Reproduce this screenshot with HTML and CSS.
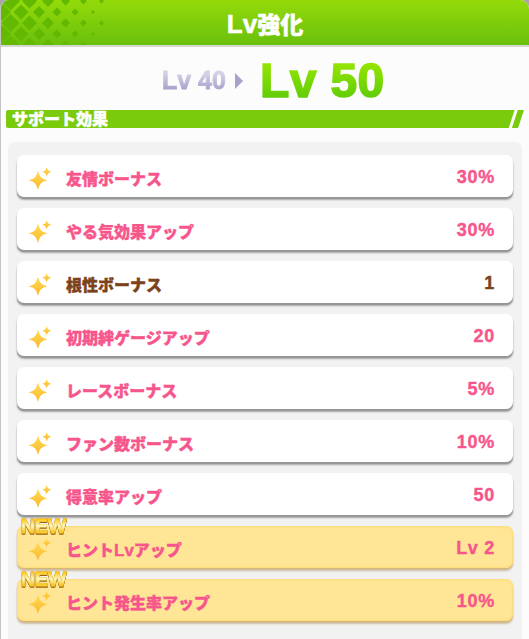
FILE: index.html
```html
<!DOCTYPE html>
<html lang="ja">
<head>
    <meta charset="UTF-8">
    <meta name="viewport" content="width=device-width, initial-scale=1.0">
    <title>Lv強化</title>
    <link rel="stylesheet" href="styles.css">
</head>
<body>

    <!-- Shared sparkle icon -->
    <svg class="defs" width="0" height="0">
        <defs>
            <linearGradient id="gold" x1="0" y1="0" x2="0" y2="1">
                <stop offset="0" stop-color="#ffdd55"/>
                <stop offset="1" stop-color="#fbb62c"/>
            </linearGradient>
            <symbol id="sparkle" viewBox="0 0 24 24">
                <path fill="url(#gold)" d="M10 3.500C11.800 10 13.200 11.600 19.500 13.300C13.200 15 11.800 16.600 10 23C8.200 16.600 6.800 15 0.500 13.300C6.800 11.600 8.200 10 10 3.500Z"/>
                <path fill="url(#gold)" d="M18.700 0C19.500 3 20.300 3.800 23.500 4.800C20.300 5.800 19.500 6.500 18.700 9.500C17.900 6.500 17.200 5.800 14 4.800C17.200 3.800 17.900 3 18.700 0Z"/>
            </symbol>
        </defs>
    </svg>

    <div class="dialog">
        <header class="header">
            <svg class="pattern" width="110" height="45" viewBox="0 0 110 45">
                <path d="M0 1l9.500-9.500 9.500 9.500-9.500 9.500zM21 1l7.500-7.500 7.500 7.500-7.500 7.500zM41 1l6-6 6 6-6 6zM60 1l4.500-4.500 4.500 4.500-4.500 4.500zM79 1l3.500-3.500 3.500 3.500-3.500 3.500zM98 1l2.500-2.500 2.500 2.500-2.500 2.500z"/>
                <path d="M-7 12l8.500-8.500 8.500 8.500-8.500 8.500zM12.500 12l7.500-7.500 7.500 7.500-7.500 7.500zM32 12l6-6 6 6-6 6zM51.500 12l4.500-4.500 4.500 4.500-4.500 4.500zM70.500 12l3.500-3.500 3.500 3.500-3.500 3.500zM90 12l2-2 2 2-2 2z"/>
                <path d="M0.500 23l9-9 9 9-9 9zM21 23l7.500-7.500 7.500 7.500-7.500 7.500zM41 23l6-6 6 6-6 6zM60 23l4.500-4.500 4.500 4.500-4.500 4.500zM79 23l3.500-3.500 3.500 3.500-3.500 3.500zM98 23l2.500-2.500 2.500 2.500-2.500 2.500z"/>
                <path d="M-7 34l8.500-8.500 8.500 8.500-8.500 8.500zM12.500 34l7.500-7.500 7.500 7.500-7.500 7.500zM32 34l6-6 6 6-6 6zM51.500 34l4.500-4.500 4.500 4.500-4.500 4.500zM70.500 34l3.500-3.500 3.500 3.500-3.500 3.500zM90 34l2-2 2 2-2 2z"/>
                <path d="M0.500 45l9-9 9 9-9 9zM21 45l7.500-7.500 7.500 7.500-7.500 7.500zM41 45l6-6 6 6-6 6zM60 45l4.500-4.500 4.500 4.500-4.500 4.500zM79 45l3.500-3.500 3.500 3.500-3.500 3.500z"/>
            </svg>
            <h1><span class="latin">Lv</span>強化</h1>
        </header>

        <div class="levels">
            <span class="level-old">Lv 40</span>
            <span class="arrow"></span>
            <span class="level-new">Lv 50</span>
        </div>

        <div class="section-bar">
            <h2>サポート効果</h2>
        </div>

        <div class="effects">
            <div class="effect">
                <svg class="icon"><use href="#sparkle"/></svg>
                <span class="name">友情ボーナス</span>
                <span class="value">30%</span>
            </div>
            <div class="effect">
                <svg class="icon"><use href="#sparkle"/></svg>
                <span class="name">やる気効果アップ</span>
                <span class="value">30%</span>
            </div>
            <div class="effect unchanged">
                <svg class="icon"><use href="#sparkle"/></svg>
                <span class="name">根性ボーナス</span>
                <span class="value">1</span>
            </div>
            <div class="effect">
                <svg class="icon"><use href="#sparkle"/></svg>
                <span class="name">初期絆ゲージアップ</span>
                <span class="value">20</span>
            </div>
            <div class="effect">
                <svg class="icon"><use href="#sparkle"/></svg>
                <span class="name">レースボーナス</span>
                <span class="value">5%</span>
            </div>
            <div class="effect">
                <svg class="icon"><use href="#sparkle"/></svg>
                <span class="name">ファン数ボーナス</span>
                <span class="value">10%</span>
            </div>
            <div class="effect">
                <svg class="icon"><use href="#sparkle"/></svg>
                <span class="name">得意率アップ</span>
                <span class="value">50</span>
            </div>
            <div class="effect new">
                <span class="badge">NEW</span>
                <svg class="icon"><use href="#sparkle"/></svg>
                <span class="name">ヒント<span class="latin">Lv</span>アップ</span>
                <span class="value">Lv 2</span>
            </div>
            <div class="effect new">
                <span class="badge">NEW</span>
                <svg class="icon"><use href="#sparkle"/></svg>
                <span class="name">ヒント発生率アップ</span>
                <span class="value">10%</span>
            </div>
        </div>
    </div>

</body>
</html>
```
FILE: styles.css
```css
/* General Styles */
* {
    box-sizing: border-box;
}

body {
    margin: 0;
    background: #aaa5ab;
    font-family: "Noto Sans CJK JP", sans-serif;
    font-weight: 900;
    overflow: hidden;
}

h1, h2 {
    margin: 0;
    color: #fff;
    font-weight: 900;
    -webkit-text-stroke: 0.5px;
}

.defs {
    display: block;
}

.dialog {
    height: 639px;
    background: #fcfcfc;
    border-left: 1px solid #c4c3c6;
    border-radius: 9px 9px 0 0;
    overflow: hidden;
}

/* Header */
.header {
    position: relative;
    display: flex;
    align-items: center;
    justify-content: center;
    height: 47px;
    background: linear-gradient(#94da0a, #69c00d);
    border-bottom: 2px solid #d6d6d9;
}

.pattern {
    position: absolute;
    left: 0;
    top: 0;
    fill: #63b900;
}

.header h1 {
    font-size: 23px;
    line-height: 45px;
    padding-top: 2px;
}

.header .latin {
    font-size: 26px;
}

.latin,
.value,
.level-old,
.level-new {
    font-family: "Liberation Sans", sans-serif;
    font-weight: bold;
}

/* Level change */
.levels {
    display: flex;
    align-items: center;
    height: 63px;
    padding-left: 161px;
    padding-top: 4px;
}

.level-old {
    font-size: 25px;
    background: linear-gradient(#d5d1e5 25%, #a9a2cd 80%);
    background-clip: text;
    color: transparent;
    -webkit-text-stroke: 0.8px transparent;
}

.arrow {
    margin: 0 15px 0 9px;
    border-left: 8px solid #a6a1cd;
    border-top: 8px solid transparent;
    border-bottom: 8px solid transparent;
}

.level-new {
    padding: 0 2px;
    font-size: 48px;
    letter-spacing: 0.4px;
    background: linear-gradient(#94e500 20%, #62cd08 80%);
    background-clip: text;
    color: transparent;
    -webkit-text-stroke: 1.6px transparent;
}

/* Section title */
.section-bar {
    height: 18px;
    margin: 0 5px;
    padding-left: 6px;
    border-radius: 2px 0 0 2px;
    background: linear-gradient(108deg, #79cb0c calc(100% - 15px), #fcfcfc calc(100% - 14px), #fcfcfc calc(100% - 12px), #79cb0c calc(100% - 11px));
    clip-path: polygon(0 0, 100% 0, calc(100% - 6px) 100%, 0 100%);
}

.section-bar h2 {
    font-size: 16px;
    line-height: 16px;
}

/* Effect list */
.effects {
    display: flex;
    flex-direction: column;
    gap: 11px;
    height: 510px;
    margin: 14px 7px 0;
    padding: 13px 9px 0 9px;
    border-radius: 7px;
    background: #f2f2f2;
}

.effect {
    position: relative;
    display: flex;
    align-items: center;
    height: 42px;
    padding: 0 18px 0 11px;
    border-radius: 7px;
    background: #fff;
    box-shadow: 0 2px 1px #969696, 0 3px 2px #aaa;
    color: #f7568c;
}

.icon {
    width: 24px;
    height: 24px;
    margin-top: 6px;
    flex: none;
}

.name {
    flex: 1;
    margin-left: 14px;
    padding-top: 4px;
    font-size: 16px;
    line-height: 24px;
    -webkit-text-stroke: 0.4px;
}

.name .latin {
    font-size: 17px;
    line-height: 20px;
}

.value {
    font-size: 18px;
    letter-spacing: 0.7px;
    padding-top: 2px;
    -webkit-text-stroke: 0.4px;
}

.unchanged {
    color: #7b421b;
}

.new {
    background: #ffe596;
    box-shadow: inset 0 0 2px 1px #fddc78, 0 1px 1px #d8b575, 0 3px 2px #cdbda0;
}

.badge {
    position: absolute;
    left: 4px;
    top: -11px;
    font-family: "Liberation Sans", sans-serif;
    font-size: 19.5px;
    font-weight: bold;
    line-height: 22px;
    background: linear-gradient(#ffc91a 20%, #fffac0 50%, #f8cb30 75%);
    background-clip: text;
    color: transparent;
    -webkit-text-stroke: 0.9px transparent;
    filter: drop-shadow(0 0 0.5px #b87a08) drop-shadow(0 1px 0 #985c09);
}
```
